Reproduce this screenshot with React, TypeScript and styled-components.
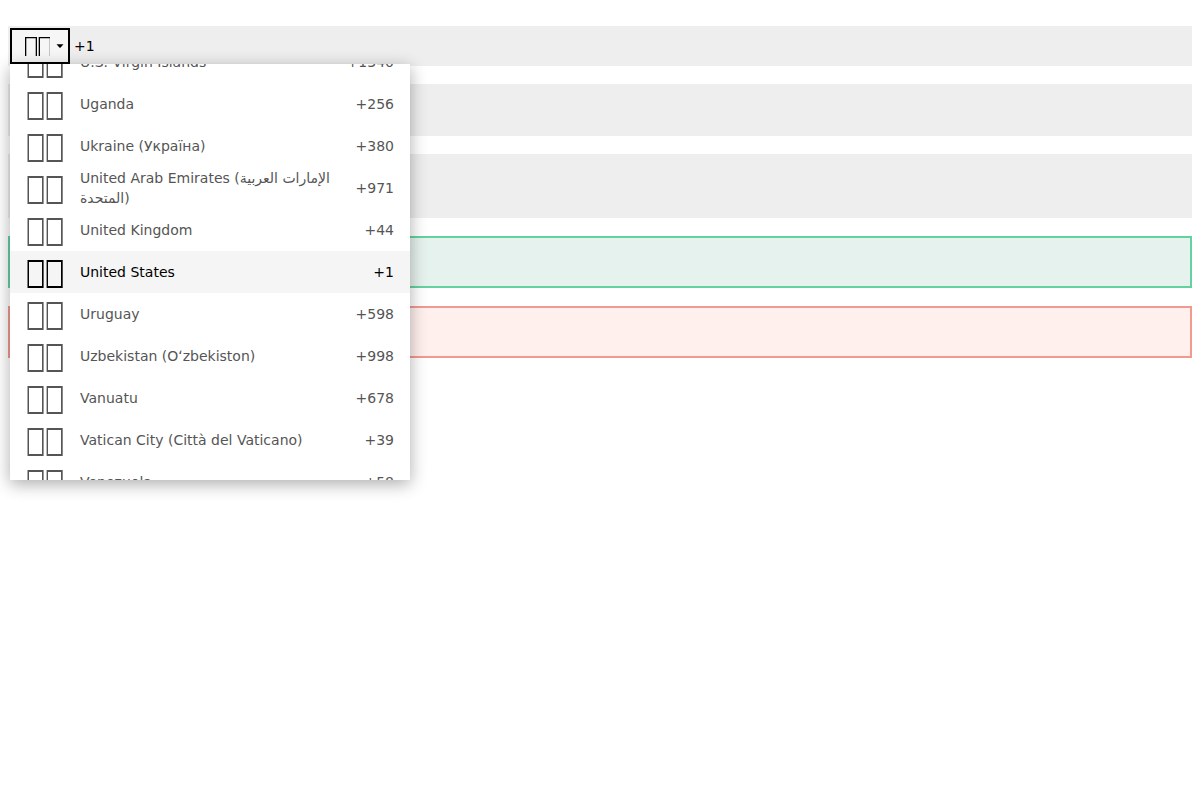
import React, { useLayoutEffect, useRef, useState } from "react";
import styled, { createGlobalStyle } from "styled-components";

type Tone = "plain" | "valid" | "invalid";

const tones: Record<Tone, { background: string; border: string }> = {
  plain: { background: "#eeeeee", border: "#eeeeee" },
  valid: { background: "#e6f2ee", border: "#65d1a0" },
  invalid: { background: "#fff0ee", border: "#f29a90" },
};

const GlobalStyle = createGlobalStyle`
  *, *::before, *::after { box-sizing: border-box; }
  body {
    margin: 0;
    background: #fff;
    color: #000;
    font-family: "DejaVu Sans", sans-serif;
    font-size: 14px;
    line-height: 20px;
  }
`;

const Form = styled.form`
  display: flex;
  flex-direction: column;
  gap: 18px;
  min-height: 100vh;
  padding: 26px 8px;
`;

const Field = styled.div<{ $height: number; $tone?: Tone }>`
  position: relative;
  display: flex;
  min-height: ${(p) => p.$height}px;
  border: 2px solid ${(p) => tones[p.$tone ?? "plain"].border};
  background: ${(p) => tones[p.$tone ?? "plain"].background};
`;

const PhoneInput = styled.input`
  flex: 1;
  min-width: 0;
  border: 0;
  padding: 0 4px;
  background: transparent;
  color: inherit;
  font: inherit;
  outline: none;
`;

const CountryButton = styled.button`
  display: flex;
  align-items: center;
  gap: 6px;
  width: 60px;
  border: 2px solid #000;
  padding: 0 4px 0 12px;
  background: #f6f6f6;
  color: #000;
  font: inherit;
`;

const ButtonFlag = styled.svg`
  flex: none;
  width: 26px;
  height: 20px;
`;

const Caret = styled.svg`
  flex: none;
  width: 8px;
  height: 4px;
`;

const Menu = styled.ul`
  position: absolute;
  z-index: 1;
  top: 100%;
  left: 0;
  width: 400px;
  max-width: 100%;
  height: 416px;
  margin: 0;
  padding: 0;
  overflow-y: auto;
  scrollbar-width: none;
  list-style: none;
  background: #fff;
  box-shadow: 0 4px 16px rgba(0, 0, 0, 0.33);
`;

const Option = styled.li`
  display: flex;
  align-items: center;
  gap: 16px;
  height: 42px;
  padding: 0 16px;
  color: #555;
  cursor: pointer;

  &[aria-selected="true"] {
    background: #f5f5f5;
    color: #000;
  }
`;

const Flag = styled.svg`
  flex: none;
  width: 38px;
  height: 42px;
`;

const Name = styled.span`
  flex: 1;
  padding-right: 8px;
`;

const Code = styled.span`
  flex: none;
`;

const countries = [
  { iso: "VI", name: "U.S. Virgin Islands", code: "+1340" },
  { iso: "UG", name: "Uganda", code: "+256" },
  { iso: "UA", name: "Ukraine (Україна)", code: "+380" },
  { iso: "AE", name: "United Arab Emirates (الإمارات العربية المتحدة)", code: "+971" },
  { iso: "GB", name: "United Kingdom", code: "+44" },
  { iso: "US", name: "United States", code: "+1" },
  { iso: "UY", name: "Uruguay", code: "+598" },
  { iso: "UZ", name: "Uzbekistan (Oʻzbekiston)", code: "+998" },
  { iso: "VU", name: "Vanuatu", code: "+678" },
  { iso: "VA", name: "Vatican City (Città del Vaticano)", code: "+39" },
  { iso: "VE", name: "Venezuela", code: "+58" },
];

export default function App() {
  const [selected, setSelected] = useState("US");
  const [open, setOpen] = useState(true);
  const menuRef = useRef<HTMLUListElement>(null);
  const country = countries.find((c) => c.iso === selected)!;

  // Opening the menu brings the selected country to its middle.
  useLayoutEffect(() => {
    const menu = menuRef.current;
    const row = menu?.querySelector<HTMLElement>('[aria-selected="true"]');
    if (menu && row) {
      menu.scrollTop = row.offsetTop - (menu.clientHeight - row.offsetHeight) / 2;
    }
  }, [open]);

  return (
    <>
      <GlobalStyle />
      <Form>
        <Field $height={40}>
          <CountryButton
            type="button"
            aria-label="Country"
            aria-haspopup="listbox"
            aria-expanded={open}
            onClick={() => setOpen(!open)}
          >
            <ButtonFlag viewBox="0 0 26 20" aria-hidden="true">
              <path
                d="M1 20V1H13V20H11.7V2.2H2.3V20ZM14.7 20V1H26V20H25.8V2.2H16V20Z"
                fill="currentColor"
              />
            </ButtonFlag>
            <Caret viewBox="0 0 8 4" aria-hidden="true">
              <path d="M.5 .2H7.5L4.6 3.6Q4 4 3.4 3.6Z" fill="currentColor" />
            </Caret>
          </CountryButton>
          <PhoneInput key={selected} type="tel" aria-label="Phone number" defaultValue={country.code} />
          {open && (
            <Menu ref={menuRef} role="listbox" aria-label="Countries">
              {countries.map((c) => (
                <Option
                  key={c.iso}
                  role="option"
                  aria-selected={c.iso === selected}
                  onClick={() => {
                    setSelected(c.iso);
                    setOpen(false);
                  }}
                >
                  <Flag viewBox="0 0 38 42" aria-hidden="true">
                    <path
                      d="M1.5 9H17.6V37H1.5ZM3 11V35H16V11ZM20.6 9H36.7V37H20.6ZM22 11V35H35V11Z"
                      fill="currentColor"
                      fillRule="evenodd"
                    />
                  </Flag>
                  <Name>{c.name}</Name>
                  <Code>{c.code}</Code>
                </Option>
              ))}
            </Menu>
          )}
        </Field>
        <Field $height={52}>
          <PhoneInput type="tel" aria-label="Phone number, medium" />
        </Field>
        <Field $height={64}>
          <PhoneInput type="tel" aria-label="Phone number, large" />
        </Field>
        <Field $height={52} $tone="valid">
          <PhoneInput type="tel" aria-label="Phone number, valid" />
        </Field>
        <Field $height={52} $tone="invalid">
          <PhoneInput type="tel" aria-label="Phone number, invalid" aria-invalid="true" />
        </Field>
      </Form>
    </>
  );
}
